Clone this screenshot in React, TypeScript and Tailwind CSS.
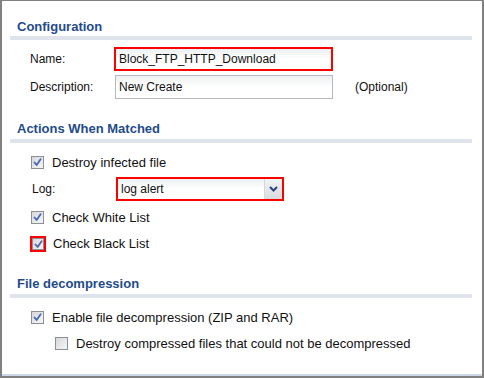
import type { ReactNode } from "react";

const font = { fontFamily: '"Liberation Sans", Arial, sans-serif' };

const Check = ({ checked, small }: { checked: boolean; small?: boolean }) => (
  <span
    className={`flex shrink-0 items-center justify-center border border-[#8d8f92] bg-gradient-to-br from-[#d6d8db] to-[#f5f6f7] ${
      small ? "h-[12px] w-[12px]" : "h-[13px] w-[13px]"
    }`}
  >
    {checked && (
      <svg width="9" height="9" viewBox="0 0 9 9">
        <path
          d="M1.5 4.5 L3.6 7 L7.6 1.2"
          fill="none"
          stroke="#4a68b4"
          strokeWidth="1.8"
          strokeLinecap="round"
          strokeLinejoin="round"
        />
      </svg>
    )}
  </span>
);

const Section = ({ title, children, className }: { title: string; children: ReactNode; className?: string }) => (
  <div className={className}>
    <h2 className="h-[16px] pl-[7px] text-[13px] font-bold leading-[16px] text-[#1f4b8c]">{title}</h2>
    {children}
  </div>
);

const CheckRow = ({ label, checked, className }: { label: string; checked: boolean; className?: string }) => (
  <div className={`flex h-[13px] items-center gap-[8px] ${className ?? ""}`}>
    <Check checked={checked} />
    <span className="text-[13px] leading-[16px]">{label}</span>
  </div>
);

export default function App() {
  return (
    <div
      style={font}
      className="flex h-[378px] w-[484px] flex-col border-x-2 border-t border-b-2 border-[#808080] bg-white text-[#111]"
    >
      <div className="flex-1 pl-[8px] pr-[10px]">
        <Section title="Configuration" className="mt-[18px]">
          <div className="mt-[1px] h-[4px] bg-[#dfe4ec]" />
          <div className="mt-[7px] flex items-center pl-[20px]">
            <span className="w-[84px] text-[12px]">Name:</span>
            <div className="flex h-[24px] w-[219px] items-center border-2 border-[#ff0000] bg-gradient-to-b from-[#edf0f1] to-white to-50% pl-[3px] text-[12px]">
              Block_FTP_HTTP_Download
            </div>
          </div>
          <div className="mt-[4px] flex items-center pl-[20px]">
            <span className="w-[85px] text-[12px]">Description:</span>
            <div className="flex h-[24px] w-[218px] items-center border border-[#b3b8c2] bg-gradient-to-b from-[#edf0f1] to-white to-50% pl-[3px] text-[12px]">
              New Create
            </div>
            <span className="ml-[22px] text-[12px]">(Optional)</span>
          </div>
        </Section>

        <Section title="Actions When Matched" className="mt-[22px]">
          <div className="mt-[2px] h-[4px] bg-[#dfe4ec]" />
          <div className="pl-[21px]">
            <CheckRow label="Destroy infected file" checked className="mt-[13px]" />
            <div className="mt-[8px] flex items-center">
              <span className="w-[85px] pl-[1px] text-[12px]">Log:</span>
              <div className="flex h-[24px] w-[168px] items-stretch border-2 border-[#ff0000]">
                <div className="flex flex-1 items-center bg-gradient-to-b from-[#edf0f1] to-white to-50% pl-[3px] text-[12px]">
                  log alert
                </div>
                <div className="flex w-[18px] items-center justify-center border-l border-[#d4d7dc] bg-gradient-to-b from-[#f2f3f4] to-[#d9dcdf]">
                  <svg width="9" height="6" viewBox="0 0 9 6">
                    <path d="M1 1 L4.5 4.5 L8 1" fill="none" stroke="#27467e" strokeWidth="2" />
                  </svg>
                </div>
              </div>
            </div>
            <CheckRow label="Check White List" checked className="mt-[10px]" />
            <div className="mt-[12px] flex h-[16px] items-center gap-[7px]">
              <span className="-ml-[1px] flex h-[16px] w-[16px] items-center justify-center border-2 border-[#ff0000]">
                <Check checked small />
              </span>
              <span className="text-[13px] leading-[16px]">Check Black List</span>
            </div>
          </div>
        </Section>

        <Section title="File decompression" className="mt-[24px]">
          <div className="mt-[2px] h-[4px] bg-[#dfe4ec]" />
          <div className="pl-[21px]">
            <CheckRow label="Enable file decompression (ZIP and RAR)" checked className="mt-[13px]" />
            <CheckRow
              label="Destroy compressed files that could not be decompressed"
              checked={false}
              className="mt-[13px] pl-[24px]"
            />
          </div>
        </Section>
      </div>
      <div className="h-[2px] bg-[#cbd8e8]" />
    </div>
  );
}
